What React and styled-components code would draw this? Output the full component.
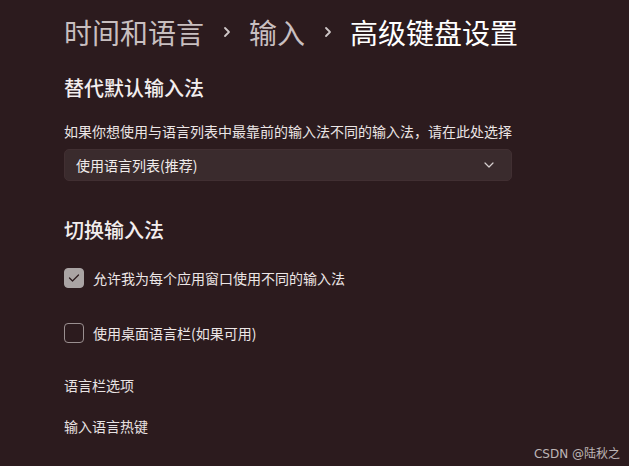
import React from "react";
import styled, { createGlobalStyle } from "styled-components";

const Global = createGlobalStyle`
  html, body { margin: 0; padding: 0; background: #2c1b1e; }
  body { font-family: "Noto Sans CJK SC", "Noto Sans", sans-serif; }
`;

const Page = styled.div`
  position: relative;
  width: 629px;
  height: 466px;
  overflow: hidden;
  box-sizing: border-box;
  padding: 12px 0 0 64px;
  background: #2c1b1e;
  color: #ece6e6;
  display: flex;
  flex-direction: column;
`;

const Breadcrumb = styled.div`
  display: flex;
  align-items: center;
  height: 40px;
  font-size: 28px;
  line-height: 40px;
  letter-spacing: 0;
`;

const Crumb = styled.span`
  color: ${(p) => (p.$current ? "#ffffff" : "#c8bfc0")};
`;

const Sep = styled.span`
  display: flex;
  align-items: center;
  justify-content: center;
  width: 45px;
  color: #c8bfc0;
`;

const Heading = styled.h2`
  margin: ${(p) => p.$mt}px 0 0;
  font-size: 20px;
  line-height: 28px;
  font-weight: 500;
  color: #f3eeee;
`;

const Desc = styled.p`
  margin: 19px 0 0;
  font-size: 14px;
  line-height: 20px;
  color: #ebe5e5;
`;

const Select = styled.div`
  margin-top: 8px;
  width: 448px;
  height: 32px;
  box-sizing: border-box;
  border-radius: 5px;
  background: #3a2b2d;
  border: 1px solid #412f32;
  display: flex;
  align-items: center;
  justify-content: space-between;
  padding: 0 16px 0 11px;
  font-size: 14px;
  color: #f0ebeb;
`;

const Row = styled.label`
  margin-top: ${(p) => p.$mt}px;
  display: flex;
  align-items: center;
  gap: 9px;
  height: 20px;
  font-size: 14px;
  color: #ece6e6;
`;

const Box = styled.span`
  width: 20px;
  height: 20px;
  box-sizing: border-box;
  border-radius: 4px;
  display: flex;
  align-items: center;
  justify-content: center;
  background: ${(p) => (p.$checked ? "#aaa4a4" : "transparent")};
  border: 1px solid ${(p) => (p.$checked ? "#aaa4a4" : "#9a8f90")};
`;

const LinkText = styled.div`
  margin-top: ${(p) => p.$mt}px;
  font-size: 14px;
  line-height: 20px;
  color: #e8e2e2;
`;

const Watermark = styled.div`
  position: absolute;
  right: 9px;
  bottom: 5px;
  font-size: 12px;
  line-height: 14px;
  color: #bdb5b6;
  font-family: "DejaVu Sans", "Noto Sans CJK SC", sans-serif;
`;

const Chevron = () => (
  <svg width="12" height="16" viewBox="0 0 12 16">
    <path d="M4 4 L8 8 L4 12" fill="none" stroke="#cfc7c8" strokeWidth="1.8" strokeLinecap="round" strokeLinejoin="round" />
  </svg>
);

const Down = () => (
  <svg width="12" height="8" viewBox="0 0 12 8">
    <path d="M2 2 L6 6 L10 2" fill="none" stroke="#d6cfcf" strokeWidth="1.2" strokeLinecap="round" strokeLinejoin="round" />
  </svg>
);

const Check = () => (
  <svg width="12" height="10" viewBox="0 0 12 10">
    <path d="M1.5 5 L4.5 8 L10.5 2" fill="none" stroke="#2c1b1e" strokeWidth="1.3" strokeLinecap="round" strokeLinejoin="round" />
  </svg>
);

export default function App() {
  return (
    <>
      <Global />
      <Page>
        <Breadcrumb>
          <Crumb>时间和语言</Crumb>
          <Sep><Chevron /></Sep>
          <Crumb>输入</Crumb>
          <Sep><Chevron /></Sep>
          <Crumb $current>高级键盘设置</Crumb>
        </Breadcrumb>

        <Heading $mt={22}>替代默认输入法</Heading>
        <Desc>如果你想使用与语言列表中最靠前的输入法不同的输入法，请在此处选择</Desc>
        <Select>
          <span>使用语言列表(推荐)</span>
          <Down />
        </Select>

        <Heading $mt={35}>切换输入法</Heading>
        <Row $mt={24}>
          <Box $checked><Check /></Box>
          允许我为每个应用窗口使用不同的输入法
        </Row>
        <Row $mt={35}>
          <Box />
          使用桌面语言栏(如果可用)
        </Row>

        <LinkText $mt={32}>语言栏选项</LinkText>
        <LinkText $mt={21}>输入语言热键</LinkText>

        <Watermark>CSDN @陆秋之</Watermark>
      </Page>
    </>
  );
}
